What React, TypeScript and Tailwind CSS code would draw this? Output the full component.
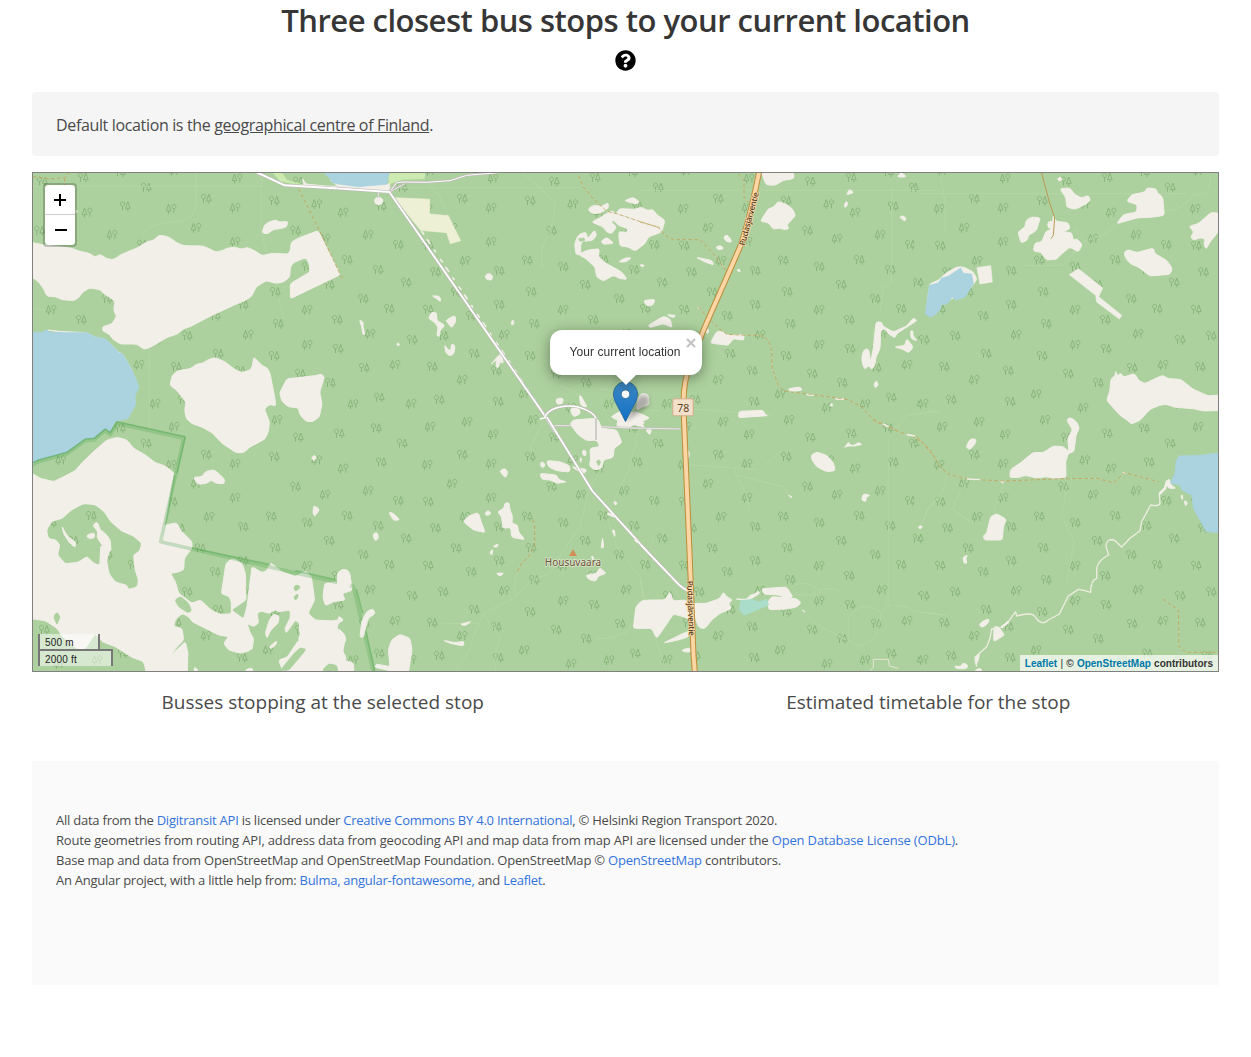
import React from "react";
import { FaQuestionCircle } from "react-icons/fa";

const LAND = "#f2efe9";
const FOREST = "#add19e";
const WATER = "#aad3df";

type Tree = [number, number];

// Trees with the round crown on the left.
const roundFirst: Tree[] = [
  [561, 16], [438, 28], [750, 46], [162, 80], [366, 86], [687, 102], [60, 221], [430, 176], [738, 218],
  [357, 265], [585, 263], [82, 300], [273, 296], [465, 284], [678, 293], [369, 359], [531, 338], [144, 360],
  [762, 331], [-6, 331], [273, 398], [633, 380], [60, 412], [189, 431], [711, 410], [555, 443], [378, 455],
  [105, 491], [12, 503], [780, 503], [558, 530], [198, 545], [366, 551], [72, 584], [264, 596], [444, 605],
  [636, 587], [534, 632], [93, 683], [270, 689], [681, 676], [672, 0], [672, 768],
];

// Trees with the conifer on the left.
const coniferFirst: Tree[] = [
  [255, 19], [57, 110], [249, 107], [573, 121], [494, 96], [132, 167], [249, 209], [648, 188], [519, 200],
  [171, 266], [465, 413], [288, 488], [654, 485], [465, 518], [162, 623], [729, 578], [348, 666], [489, 707],
  [9, 695], [777, 695], [603, 696], [177, 749], [375, 743], [66, 764], [66, -4],
];

function ForestPattern({ id, transform }: { id: string; transform?: string }) {
  return (
    <pattern id={id} width="768" height="768" patternUnits="userSpaceOnUse" patternTransform={transform}>
      <rect width="768" height="768" fill={FOREST} />
      <g fill="none" stroke="#87b279" strokeWidth="2.9">
        {roundFirst.map(([x, y]) => (
          <path
            key={`r${x},${y}`}
            transform={`translate(${x} ${y})`}
            d="M-7.5-13a6 6.8 0 1 0 .1 0zM-7.5 0V13M8.5-13L15.5 7H1.5zM8.5 7V15"
          />
        ))}
        {coniferFirst.map(([x, y]) => (
          <path
            key={`c${x},${y}`}
            transform={`translate(${x} ${y})`}
            d="M8.5-13a6 6.8 0 1 0 .1 0zM8.5 0V13M-7.5-13L-.5 7H-14.5zM-7.5 7V15"
          />
        ))}
      </g>
    </pattern>
  );
}

// Closed outline through the given points with its corners slightly rounded.
function roundedOutline(points: string) {
  const p = points.split(" ").map((pair) => pair.split(",").map(Number));
  const n = p.length;
  const toward = (a: number[], b: number[]) => {
    const length = Math.hypot(b[0] - a[0], b[1] - a[1]) || 1;
    const t = Math.min(0.38, 7 / length);
    return `${(a[0] + (b[0] - a[0]) * t).toFixed(1)} ${(a[1] + (b[1] - a[1]) * t).toFixed(1)}`;
  };
  const parts = p.map((v, i) => {
    const prev = p[(i + n - 1) % n];
    const next = p[(i + 1) % n];
    return `${i ? "L" : "M"}${toward(v, prev)}Q${v[0]} ${v[1]} ${toward(v, next)}`;
  });
  return parts.join("") + "Z";
}

function Clearings({ items }: { items: string[] }) {
  return (
    <g fill={LAND} stroke={LAND} strokeWidth="3" strokeLinejoin="round">
      {items.map((points) => (
        <path key={points} d={roundedOutline(points)} />
      ))}
    </g>
  );
}

function Shapes({ items, fill }: { items: string[]; fill: string }) {
  return (
    <g fill={fill} stroke={fill} strokeWidth="2" strokeLinejoin="round">
      {items.map((points) => (
        <polygon key={points} points={points} />
      ))}
    </g>
  );
}

// Each sheet of the map is drawn at three units to the pixel.
function Sheet({ x, y, children }: { x: number; y: number; children: React.ReactNode }) {
  return <g transform={`translate(${x} ${y}) scale(0.333333)`}>{children}</g>;
}

function Faint({ d }: { d: string }) {
  return <path d={d} fill="none" stroke="#b6d7a7" strokeWidth="2.2" strokeLinejoin="round" />;
}

function Track({ d }: { d: string }) {
  return (
    <g fill="none" strokeLinejoin="round">
      <path d={d} stroke="#d5dfbb" strokeWidth="2.6" opacity="0.5" />
      <path d={d} stroke="#b98f3f" strokeWidth="2.5" strokeDasharray="12 6" opacity="0.75" />
    </g>
  );
}

function Road({ d, width = 8 }: { d: string; width?: number }) {
  return (
    <g fill="none" strokeLinejoin="round">
      <path d={d} stroke="#bfbbb8" strokeWidth={width + 2} />
      <path d={d} stroke="#ffffff" strokeWidth={width - 2} />
    </g>
  );
}

const northWest = [
  "3,212 40,220 100,226 120,229 140,237 172,244 190,255 205,247 222,259 240,263 252,259 262,250 300,234 318,227 345,209 365,205 380,190 402,192 418,200 436,213 455,221 512,222 530,229 550,240 568,237 585,229 606,225 630,232 645,226 668,236 690,251 720,244 768,246 775,236 778,210 800,198 858,176 925,308 775,380 775,335 834,300 830,270 820,257 785,272 775,285 773,315 755,330 732,334 702,326 672,345 660,372 640,385 600,402 530,435 475,464 455,470 436,486 405,496 378,513 350,528 335,532 320,520 310,516 265,516 240,500 230,485 213,478 211,465 240,455 254,433 245,415 249,388 232,375 218,368 205,353 172,348 150,362 142,376 125,386 90,383 70,374 45,373 35,350 18,328 3,318 -20,300 -20,215",
  "414,640 420,612 435,597 475,590 495,576 512,574 530,562 550,557 580,570 605,590 628,602 655,594 662,580 665,555 690,580 708,590 715,608 720,635 726,665 732,702 712,697 697,712 712,748 710,776 700,800 685,809 655,824 635,842 612,842 590,827 570,814 540,782 510,765 480,755 463,740 458,715 462,690 447,672 435,655",
  "743,663 765,620 800,617 855,610 868,606 877,615 863,660 870,695 862,735 840,750 818,745 802,725 800,708 768,704 750,688",
  "690,182 698,158 715,148 732,144 742,150 768,148 764,165 745,170 725,172 705,186",
  "45,474 80,478 160,482 190,496 222,503 262,543 272,546 303,602 280,570 230,510 150,488",
  "812,18 820,36 880,42 960,44 960,50 815,44",
  "132,115 136,116 135,122 132,121",
];

const northMiddle = [
  "103,84 110,76 122,76 129,84 126,95 116,99 106,95",
  "745,110 760,100 785,103 805,92 805,108 785,122 760,125 748,118",
  "853,86 880,76 899,90 890,96 872,92",
  "838,110 885,112 905,105 920,115 940,113 950,128 975,145 965,180 925,195 915,215 885,237 865,225 840,222 836,190 838,178 860,182 865,170 835,160 812,135 825,130",
  "755,150 785,135 790,130 818,115 838,140 812,148 830,165 815,185 800,180 790,165",
  "704,215 715,188 738,180 743,200 764,174 770,190 758,205 730,208 722,215 722,248 708,248",
  "715,248 740,235 778,230 775,255 800,275 845,300 862,322 840,320 820,310 790,327 770,315 765,285 735,258",
  "783,208 800,196 822,214 790,217",
  "835,270 855,258 875,257 858,270",
  "898,279 912,278 910,286",
  "435,315 440,306 450,305 458,312 455,325 440,322",
  "912,385 945,382 940,398 925,403 915,395",
  "275,371 300,373 302,390 290,380",
  "265,440 275,420 290,422 290,445 315,460 300,475 298,495 290,490 295,465 280,448",
  "317,445 345,430 348,448 335,468 325,455",
  "314,518 317,542 330,552 342,545 345,520 334,516 333,535 323,533",
  "58,443 70,450 69,465 75,488 68,487 66,468",
  "170,516 174,513 179,517 175,523",
  "513,450 520,443 522,455 516,460",
  "925,460 970,433 990,440 997,467 970,455 930,467",
  "980,428 1008,430 1000,437",
  "452,578 475,551 486,543 490,575 480,568 475,588 468,585 470,562",
  "648,680 670,678 668,695 650,697",
  "690,710 715,705 722,725 700,735",
  "718,672 722,670 742,706 722,700",
  "812,735 845,715 860,722 890,720 930,738 900,750 915,765 880,758 830,768 835,745",
  "893,680 905,663 925,668 928,698 905,705 890,715",
];

const northEast = [
  "365,3 460,0 462,20 430,25 405,40 378,38",
  "361,148 385,110 400,106 415,88 438,97 455,108 467,130 440,160 448,168 435,174 420,168 400,172 385,152",
  "250,195 262,188 277,210 260,210",
  "227,225 242,220 252,230 235,234",
  "168,256 215,265 222,279 200,272",
  "292,292 300,293 301,299 293,298",
  "771,15 785,0 799,15",
  "621,66 628,51 642,62 622,68",
  "612,102 620,86 623,98 616,107",
  "778,135 788,131 798,138 796,148",
  "211,513 230,478 250,480 265,490 312,488 312,505 280,500 265,520 240,517",
  "173,404 180,410 177,412",
  "196,478 206,470 204,486",
  "297,718 370,715 373,725 384,731 295,737",
  "445,650 480,645 487,655 450,658",
  "665,560 670,536 680,530 687,535 690,560 693,565 700,530 708,450 725,450 728,462 760,480 800,462 820,438 832,445 770,485 765,498 745,485 735,470 722,475 720,530 708,555 704,580 695,593 687,580 675,592 669,580",
  "763,525 795,520 800,500 820,525 805,543 790,532",
  "812,475 820,478 818,490 832,507 813,500",
  "702,637 710,625 715,640 705,648",
  "571,695 578,696 578,703 572,702",
  "500,666 520,668 520,671 500,669",
  "585,680 612,680 612,683 588,682",
];

const farNorthEast = [
  "22,385 30,335 55,325 80,302 110,285 130,285 160,300 171,322 150,350 60,400",
  "413,20 420,15 426,20 423,27 415,26",
  "420,50 450,48 465,68 485,78 505,70 512,85 495,98 465,112 440,105 438,78",
  "590,155 610,128 650,120 652,98 620,88 635,68 675,60 680,48 708,50 712,62 728,75 733,130 700,135 650,138",
  "294,180 315,165 318,145 335,135 362,138 355,155 350,175 325,190 322,205 303,213",
  "340,238 345,212 365,210 378,178 395,172 383,165 385,148 398,150 400,128 407,148 445,152 450,172 425,178 455,182 460,205 470,200 487,218 475,240 450,225 420,250 410,262 380,264 362,240",
  "613,240 625,233 650,242 700,228 705,245 740,265 757,290 750,307 690,312 655,285 630,275 615,255",
  "807,163 835,155 872,122 893,122 910,150 893,182 870,210 858,232 852,215 855,200 840,197 820,205 812,195 822,180",
  "560,685 570,655 573,620 585,612 587,596 591,612 603,603 610,615 645,605 655,625 675,635 700,622 728,610 745,620 782,622 820,652 865,672 910,668 910,715 850,717 820,710 765,706 740,697 718,700 690,712 660,745 637,755 600,730",
];

const angularClearings = [
  "171,287 212,281 217,330 180,336",
  "448,308 475,290 548,348 536,374 605,430 598,441 530,390 527,370",
];

const southWest = [
  "-30,150 3,162 25,175 65,185 95,170 130,152 150,128 190,90 225,60 255,52 285,60 305,85 340,105 370,128 400,138 427,160 412,240 400,315 435,308 445,330 480,365 480,385 457,415 455,450 435,457 415,460 430,485 440,520 480,550 505,540 540,572 565,583 598,582 598,545 590,528 568,522 582,430 600,415 630,430 640,460 642,540 598,570 635,597 645,560 650,520 660,440 690,458 705,452 715,428 750,455 790,470 820,453 838,470 848,540 828,580 850,600 900,603 935,597 915,615 918,645 938,665 932,695 942,710 938,760 755,760 740,720 765,712 800,660 820,690 800,660 803,610 790,600 762,640 758,620 775,590 775,570 740,575 705,580 690,572 675,580 680,610 665,620 645,610 655,640 665,655 660,690 625,700 590,690 575,670 590,650 560,645 530,630 480,605 470,590 450,580 430,600 425,620 450,625 455,660 435,680 415,708 460,665 468,700 465,765 345,765 335,725 300,712 250,680 210,665 190,640 160,685 140,690 90,648 75,625 40,602 3,597 -30,590",
  "484,172 510,170 520,155 545,149 560,160 578,178 576,192 550,189 538,180 525,190 498,193",
  "838,113 848,105 853,115 845,122",
  "845,256 863,268 848,289 843,280",
  "925,460 935,450 947,450 955,465 955,485",
  "878,490 910,486 960,493 960,512 930,520 940,540 905,545 880,557 873,530",
  "815,-3 845,-3 828,6",
  "638,752 655,743 672,752",
  "486,754 488,740 500,754",
];

const southWestForest = [
  "45,330 60,305 90,297 120,270 155,252 190,256 215,275 235,305 270,335 305,350 328,370 322,392 303,405 308,450 318,480 315,500 290,507 285,495 250,485 232,460 225,420 237,385 205,375 202,435 185,428 165,408 140,425 100,430 78,405 85,375 72,358 50,355",
  "427,540 445,528 470,548 480,572 468,580 440,562",
  "63,590 75,575 86,590 75,616",
  "783,502 795,492 808,502 790,516",
  "783,530 798,520 800,532 790,542",
  "723,705 760,660 800,628 805,645 765,695 735,710",
  "743,752 785,700 805,682 824,687 810,705 770,752",
  "872,748 890,730 915,735 920,756 874,756",
  "690,640 700,600 720,575 735,570 742,600 765,580 775,590 745,650 720,680 735,690 735,760 665,760 650,690 665,690 668,660",
];

const southWestClearings = [
  "90,318 98,335 110,352 131,366 131,382 115,372 95,342",
  "164,345 188,338 187,355 168,355",
  "183,318 190,308 198,309 203,328 220,340 235,360 237,395 210,375 195,352 198,335",
  "700,640 712,600 725,582 742,588 738,610 715,632 705,655",
  "712,680 735,662 732,675 716,686",
];

const southMiddle = [
  "690,12 700,0 765,-5 775,0 785,25 830,30 846,68 822,85 820,112 790,120 785,145 765,150 748,138 752,118 750,85 780,80 770,60 740,62 715,45",
  "602,125 615,130 612,143 602,140",
  "620,122 660,125 690,138 689,156 650,152 625,140",
  "600,160 650,165 655,178 680,186 650,190 632,180 605,178",
  "728,90 738,92 738,108 728,105",
  "695,140 740,148 735,160 718,155",
  "720,112 725,116 722,130",
  "828,10 850,0 915,6 905,14 880,10 870,25 840,22",
  "479,152 495,145 503,155 499,172 490,168",
  "146,276 160,280 180,300 160,301",
  "98,342 112,337 116,355 105,363",
  "370,305 385,288 415,278 425,310 436,338 415,333 400,330",
  "434,280 445,271 454,282 440,287",
  "472,275 492,265 494,250 507,247 510,270 518,290 515,310 533,315 535,335 555,359 515,352 512,322 488,325 485,290",
  "458,380 475,371 472,382",
  "449,398 458,386 456,407",
  "468,460 492,459 480,469",
  "738,465 770,460 779,443 799,460 775,468 768,484 745,478",
  "754,407 762,412 758,422",
  "783,385 788,352 791,383",
  "816,330 824,330 825,352",
  "821,243 832,249 826,257",
  "145,690 155,660 180,643 210,655 216,690 205,760 150,752 105,742 108,732 150,740",
  "60,652 65,605 80,575 98,566 106,580 85,595 75,630 70,652",
  "-8,460 8,447 24,452 35,490 10,520 -5,542",
  "-5,588 12,600 -5,607",
  "-5,625 15,645 18,665 -5,678",
  "-5,718 40,728 42,758 -5,758",
  "310,661 345,668 372,664 371,678 330,670",
  "360,613 395,604 375,617",
  "917,30 935,23 930,46",
];

const southEast = [
  "-20,625 -12,560 5,542 30,540 75,540 90,515 95,530 100,543 135,540 150,550 200,550 240,535 250,516 260,530 278,540 265,550 275,565 240,580 215,600 200,620 190,627 175,620 165,590 150,600 130,590 100,582 75,620 50,655 35,625",
  "70,669 100,655 130,640 148,633 146,650 115,660",
  "125,690 150,683 153,696 133,696",
  "514,105 530,96 560,106 580,128 586,152 560,155 530,140 515,118",
  "612,82 618,78 625,65 632,76 645,75 655,67 667,73 645,78 625,78",
  "664,240 670,221 691,226 678,232 678,245",
  "445,224 458,233 450,231",
  "834,320 848,319 840,328",
  "366,506 440,501 459,532 435,532 415,525 370,522",
  "384,545 395,530 470,536 484,548 470,561 440,567 386,569",
  "286,537 320,538 330,525 345,522 355,512 360,520 340,532 325,541",
  "487,568 496,577 490,574",
  "142,90 148,95 147,112 142,113",
];

const farSouthEast = [
  "440,0 450,-8 470,5 478,25 468,45 462,95 445,100 437,125 438,172 400,175 380,170 350,174 315,166 300,172 269,173 272,148 300,130 340,97 370,98 400,78 430,80 447,95 443,55 458,30",
  "138,82 150,57 169,57 165,72 150,89",
  "190,347 200,340 206,315 212,290 230,281 259,298 250,320 247,360 193,360",
  "129,410 144,406 137,413 141,431 131,429",
  "782,228 788,224 788,241",
  "792,241 803,247 797,259",
  "738,185 748,176 752,195 769,205 745,205",
  "177,613 195,600 208,597 203,612 185,623",
  "222,620 235,620 254,645 221,665",
  "102,738 122,740 128,729 144,735 140,746 110,746",
  "618,-3 652,-3 635,13",
  "240,183 253,184 248,190",
  "608,160 612,155 617,161",
  "-4,318 7,318 2,327",
  "164,716 179,699 175,720 168,736",
  "163,752 180,744 187,754",
];

const HIGHWAY =
  "M759.5 170C755 192 750 219 740 247L704 329L690 364Q683.5 382 683.5 402L684 420L690.5 576L693.5 655L695 674";

function MapArtwork() {
  return (
    <svg
      viewBox="33 173 1185 498"
      className="block h-full w-full"
      role="img"
      aria-label="Map"
      fontFamily='"Noto Sans", sans-serif'
    >
      <defs>
        <ForestPattern id="forest" transform="translate(920 172) scale(0.333333)" />
        <ForestPattern id="forest-sw" transform="translate(360 24)" />
        <linearGradient id="pin" x1="0" y1="0" x2="0" y2="1">
          <stop offset="0" stopColor="#3e8bc6" />
          <stop offset="1" stopColor="#126fc6" />
        </linearGradient>
        <filter id="soft" x="-40%" y="-40%" width="180%" height="180%">
          <feGaussianBlur stdDeviation="2" />
        </filter>
      </defs>

      <rect x="33" y="173" width="1185" height="498" fill="url(#forest)" />

      <Sheet x={32} y={172}>
        <Faint d="M3 43H690M493 3V95Q485 145 440 149Q350 150 330 190M690 3L686 170L702 240M3 408L40 415M740 380L755 440M352 530V770" />
        <Clearings items={northWest} />
        <Shapes fill="#cdebb0" items={["725,4 750,4 765,25 812,38 745,28"]} />
        <Shapes
          fill={WATER}
          items={[
            "3,481 35,480 42,472 55,481 165,482 188,494 223,502 262,543 272,545 304,602 321,645 309,673 311,698 288,740 250,748 235,779 220,771 187,799 160,801 105,841 20,864 3,874",
          ]}
        />
        <Track d="M800 50L862 175L925 308L932 322" />
        <Track d="M3 14L50 20L98 18L110 3M98 18V40" />
        <Road d="M672 0L758 40L960 52" width={8} />
      </Sheet>

      <Sheet x={340} y={172}>
        <Faint d="M548 3L645 90L640 150L605 230L607 290M260 30L300 75L345 180M0 47H720M660 640L720 668M775 650L840 660M895 716H960" />
        <Clearings items={northMiddle} />
        <Shapes fill={LAND} items={["-30,24 0,36 60,43 142,37 150,30 148,58 0,48"]} />
        <Shapes fill="#cdebb0" items={["150,3 255,3 253,20 190,22 165,30 148,35 146,15"]} />
        <Shapes fill={WATER} items={["-48,3 147,3 140,37 55,44 0,37 -22,32 -30,20"]} />
        <Shapes fill="#eef0d5" items={["163,77 269,82 269,126 325,131 362,206 331,215 320,182 242,175"]} />
        <Shapes fill={FOREST} items={["715,200 732,198 735,206 720,208"]} />
        <Track d="M715 10L730 45L760 80L800 118L830 125L880 142L960 168" />
        <path
          d="M240 187L605 731"
          stroke={LAND}
          strokeWidth="5"
          strokeDasharray="9 20 14 24 5 28"
          strokeLinecap="round"
          fill="none"
          transform="translate(6 -8)"
        />
        <Road d="M115 60V78" width={4} />
        <Road d="M148 60L170 32L190 30L260 31L330 26L380 10L475 2" width={5} />
        <Road d="M148 60L195 35" width={4} />
        <Road d="M-10 49L148 60L615 732L645 780" width={7.5} />
        <Road d="M615 732Q630 710 660 705Q700 696 735 712Q762 724 768 738V780" width={6.5} />
        <path d="M600 741L620 736" stroke="#fff" strokeWidth="4" />
      </Sheet>

      <Sheet x={640} y={172}>
        <Faint d="M0 55H900M755 50V330L730 345L720 420M700 470V520M165 712L400 728M900 718L800 730L770 770" />
        <Clearings items={northEast} />
        <Track d="M0 150L55 165L75 190L100 203H180L220 245L260 300" />
        <Track d="M295 5L312 25V75L325 92" />
        <Track d="M175 405L215 450L260 487L370 492L385 505L394 530L397 590L415 640L430 657L520 668L625 683L665 705L705 748L775 778" />
      </Sheet>

      <Sheet x={920} y={172}>
        <Faint d="M0 65H800M60 3L75 90V180M870 3Q880 70 820 70Q780 120 740 115M590 155L560 185L490 210L430 280H310M0 722L50 715M460 165L490 200" />
        <Clearings items={farNorthEast} />
        <Shapes fill={LAND} items={angularClearings} />
        <Shapes
          fill={WATER}
          items={[
            "16,425 20,395 28,340 55,333 65,318 85,313 122,288 130,304 155,306 160,335 135,375 108,385 97,375 80,397 65,397 60,413 50,425 30,436",
          ]}
        />
        <path d="M365 3L388 90L404 138L400 190L393 200" fill="none" stroke="#b89a52" strokeWidth="3" />
      </Sheet>

      <Sheet x={32} y={420}>
        <Clearings items={southWest} />
        <g fill="url(#forest-sw)">
          {southWestForest.map((points) => (
            <path key={points} d={roundedOutline(points)} />
          ))}
        </g>
        <Clearings items={southWestClearings} />
        <g fill="none" stroke="#4fa64f" strokeLinejoin="round">
          <path
            d="M3 133L20 123L105 100L160 60L187 58L220 30L235 42L258 9L456 53L387 363L965 497L1025 752"
            strokeWidth="11"
            opacity="0.28"
            transform="translate(-1 2)"
          />
          <path d="M3 128L20 120L105 97L160 57L187 55L220 27L235 38L255 5L460 50" strokeWidth="4.5" opacity="0.5" />
          <path
            d="M460 50L435 160M428 165L400 315M480 384L715 434M790 452L910 479M973 508L992 580M1000 625L1028 752"
            strokeWidth="5"
            opacity="0.45"
          />
        </g>
      </Sheet>

      <Sheet x={340} y={420}>
        <Faint d="M605 10L570 90M775 160L745 215L720 320L665 400L632 458L580 480L520 535L430 580L400 650L385 700L345 752M525 525V480L540 440M430 585L480 650L466 700V752M305 610H420M895 40L865 150L800 290L830 380L900 470L910 540M765 655H800L860 638" />
        <Clearings items={southMiddle} />
        <Shapes fill={FOREST} items={["769,125 776,119 782,126 776,138"]} />
        <Track d="M578 298L584 320V375L565 410L545 430L532 455" />
        <Road d="M640 17H692M785 20L880 24L1022 27" width={4} />
        <path d="M768 -5V60" stroke="#bdb9b5" strokeWidth="4" />
        <Road d="M621 -8L757 213L960 437" width={7.5} />
        <path d="M802 280L825 290M884 358L895 368" stroke={LAND} strokeWidth="7" />
        <polygon points="699,388 711,408 687,408" fill="#d08f55" />
        <text
          x="699"
          y="437"
          fontSize="30"
          textAnchor="middle"
          textLength="169"
          fill="#6d5038"
          stroke="#e9eedd"
          strokeWidth="4.5"
          strokeOpacity="0.8"
          strokeLinejoin="round"
          paintOrder="stroke"
        >
          Housuvaara
        </text>
      </Sheet>

      <Sheet x={640} y={420}>
        <Faint d="M152 135L350 149M284 142L288 165L315 215L330 270M288 165L430 200L446 225M375 135L420 95M745 60V550M890 240L865 265L845 318M455 500Q500 475 540 510Q570 500 600 513M455 525H530L545 512M495 575L540 620L620 660M900 583L830 575Q770 545 740 560L725 580Q670 535 625 590V660Q670 700 710 640L725 580M0 480L20 560M45 655L80 750M40 350L30 400M520 500L530 540" />
        <Clearings items={southEast} />
        <Shapes fill="#aadecb" items={["301,542 335,538 355,546 380,538 386,555 312,586 299,570"]} />
        <Track d="M700 -2L735 15L775 35L815 47L850 70L892 122" />
        <path d="M730 12L745 20M800 44L825 48" stroke={LAND} strokeWidth="5" />
        <path d="M690 752L700 742V718H745L748 738L775 745" fill="none" stroke="#e3e6d2" strokeWidth="3" />
        <Road d="M0 372L105 482Q130 510 150 514" width={7.5} />
      </Sheet>

      <Sheet x={920} y={420}>
        <Faint d="M80 170L70 210L30 260L0 320M130 190L98 270L160 310L200 315M250 190L220 280M445 170L425 290L463 365L440 490M0 577L80 586M600 170L612 185" />
        <Clearings items={farSouthEast} />
        <Shapes
          fill={WATER}
          items={["751,189 765,160 768,125 777,108 840,106 895,99 895,339 858,334 820,265 815,225 787,211 778,195"]}
        />
        <Track d="M-10 50L30 90L60 140L90 165L150 178L250 183L430 176L530 175L580 188L615 158L715 185" />
        <path d="M140 177L180 179" stroke={LAND} strokeWidth="4" />
        <Track d="M728 537L775 570L777 680L800 697H895" />
        <path
          d="M742 182L735 205L718 222L720 250Q715 260 692 255L665 305L660 332L630 355L605 381L585 362Q560 352 558 380L566 405Q535 420 530 445V475Q512 480 512 517Q490 510 475 508L445 528L418 582L385 600Q365 620 345 590Q335 575 290 588L287 575L265 605L245 622L215 627L210 655L200 680L165 712L170 740"
          fill="none"
          stroke="#eceddf"
          strokeWidth="4"
          strokeLinejoin="round"
        />
        <path d="M742 182L735 205L718 222M265 605L245 622" fill="none" stroke={LAND} strokeWidth="8" />
      </Sheet>

      <g fill="none" strokeLinejoin="round">
        <path d={HIGHWAY} stroke="#bc8f3e" strokeWidth="6" />
        <path d={HIGHWAY} stroke="#fcd6a4" strokeWidth="3.9" />
      </g>

      <g
        fontSize="8.2"
        fill="#33240c"
        stroke="#fcd6a4"
        strokeWidth="1.4"
        strokeLinejoin="round"
        paintOrder="stroke"
        textAnchor="middle"
      >
        <text transform="translate(751.8 219.5) rotate(-75)" textLength="55">
          Pudasjärventie
        </text>
        <text transform="translate(688 608.5) rotate(88)" textLength="55">
          Pudasjärventie
        </text>
      </g>

      <rect x="672.8" y="398.8" width="20.4" height="17" rx="1.5" fill="#f3e0cb" stroke="#d3ab86" />
      <text x="683.3" y="411.5" fontSize="10.5" textAnchor="middle" fill="#5b4325">
        78
      </text>

      <g filter="url(#soft)" opacity="0.28">
        <path d="M626 421L634 402Q641 392 648 397Q652 404 642 411Z" fill="#000" />
      </g>
      <path
        d="M625.5 382C618.6 382 613.5 387.3 613.5 394.2C613.5 400.5 617.5 405.3 625.5 421.5C633.5 405.3 637.5 400.5 637.5 394.2C637.5 387.3 632.4 382 625.5 382Z"
        fill="url(#pin)"
        stroke="#2e6c97"
      />
      <circle cx="625.5" cy="394.2" r="4.3" fill="#fff" stroke="#2e6c97" strokeWidth="0.9" />
    </svg>
  );
}

function Popup() {
  return (
    <div className="absolute left-[517px] top-[157px] w-[152px] drop-shadow-[0_3px_7px_rgba(0,0,0,0.4)]">
      <div className="relative flex h-[45px] items-center whitespace-nowrap rounded-xl bg-white pb-0.5 pl-[19.5px] text-xs tracking-[0.07px] text-[#333]">
        Your current location
        <svg viewBox="0 0 10 10" className="absolute right-[6px] top-[7.5px] size-[10px]" aria-label="Close">
          <path d="M1 1L9 9M9 1L1 9" stroke="#c3c3c3" strokeWidth="2.2" />
        </svg>
      </div>
      <svg viewBox="0 0 22 11" className="absolute left-[65px] top-[44px] h-[11px] w-[22px]">
        <path d="M0 0H22L11 11Z" fill="#fff" />
      </svg>
    </div>
  );
}

function MapView() {
  return (
    <div className="relative mt-4 h-[500px] overflow-hidden border border-[#808080] font-['Liberation_Sans',sans-serif]">
      <MapArtwork />
      <div className="absolute left-[10px] top-[10px] flex flex-col rounded border-2 border-black/20 bg-clip-padding">
        <button
          className="grid h-[30px] w-[30px] place-items-center rounded-t-sm border-b border-[#ccc] bg-white"
          aria-label="Zoom in"
        >
          <svg viewBox="0 0 12 12" className="size-3">
            <path d="M6 0V12M0 6H12" stroke="#000" strokeWidth="2" />
          </svg>
        </button>
        <button className="grid size-[30px] place-items-center rounded-b-sm bg-white" aria-label="Zoom out">
          <svg viewBox="0 0 12 12" className="ml-px size-3">
            <path d="M0 6H12" stroke="#000" strokeWidth="2" />
          </svg>
        </button>
      </div>
      <Popup />
      <div className="absolute bottom-[5px] left-[5px] text-[10px] leading-[11px] tracking-[0.2px] text-[#222]">
        <div className="h-[17px] w-[62px] border-2 border-t-0 border-[#777] bg-white/50 px-[5px] pt-[3px]">500 m</div>
        <div className="-mt-0.5 h-[17px] w-[75px] border-2 border-b-0 border-[#777] bg-white/50 px-[5px] pt-[3px]">
          2000 ft
        </div>
      </div>
      <div className="absolute bottom-0 right-0 h-4 whitespace-nowrap bg-white/70 px-[5px] pt-px text-[10px] font-bold leading-[15px] text-[#333] [word-spacing:0.5px]">
        <a className="text-[#0078a8]">Leaflet</a> <span className="font-normal">|</span> ©{" "}
        <a className="text-[#0078a8]">OpenStreetMap</a> contributors
      </div>
    </div>
  );
}

function Link({ children }: { children: React.ReactNode }) {
  return <a className="text-[#3273dc]">{children}</a>;
}

export default function App() {
  return (
    <main className="flex h-[1057px] flex-col bg-white px-8 font-['Open_Sans','Noto_Sans',sans-serif] text-[#4a4a4a]">
      <h1 className="h-[42px] whitespace-nowrap text-center text-[31px] font-semibold leading-[41px] tracking-[-0.5px] text-[#363636]">
        Three closest bus stops to your current location
      </h1>
      <div className="mt-2 flex h-[21px] justify-center">
        <FaQuestionCircle className="size-[21px] text-black" />
      </div>
      <div className="mt-[21px] flex h-16 items-center rounded bg-[#f5f5f5] px-6 pt-px text-base tracking-[-0.35px]">
        <p className="whitespace-nowrap">
          Default location is the <a className="underline">geographical centre of Finland</a>.
        </p>
      </div>
      <MapView />
      <div className="mt-4 grid grid-cols-2 gap-6 text-center text-[19px] leading-7">
        <h2 className="whitespace-nowrap">Busses stopping at the selected stop</h2>
        <h2 className="whitespace-nowrap tracking-[-0.06px]">Estimated timetable for the stop</h2>
      </div>
      <footer className="mt-[45px] h-56 whitespace-nowrap bg-[#fafafa] px-6 pt-[49px] text-[13px] leading-5">
        <p className="tracking-[-0.23px]">
          All data from the <Link>Digitransit API</Link> is licensed under{" "}
          <Link>Creative Commons BY 4.0 International</Link>, © Helsinki Region Transport 2020.
        </p>
        <p className="tracking-[-0.163px]">
          Route geometries from routing API, address data from geocoding API and map data from map API are licensed
          under the <Link>Open Database License (ODbL)</Link>.
        </p>
        <p className="tracking-[-0.21px]">
          Base map and data from OpenStreetMap and OpenStreetMap Foundation. OpenStreetMap © <Link>OpenStreetMap</Link>{" "}
          contributors.
        </p>
        <p className="tracking-[-0.26px]">
          An Angular project, with a little help from: <Link>Bulma,</Link> <Link>angular-fontawesome,</Link> and{" "}
          <Link>Leaflet</Link>.
        </p>
      </footer>
    </main>
  );
}
